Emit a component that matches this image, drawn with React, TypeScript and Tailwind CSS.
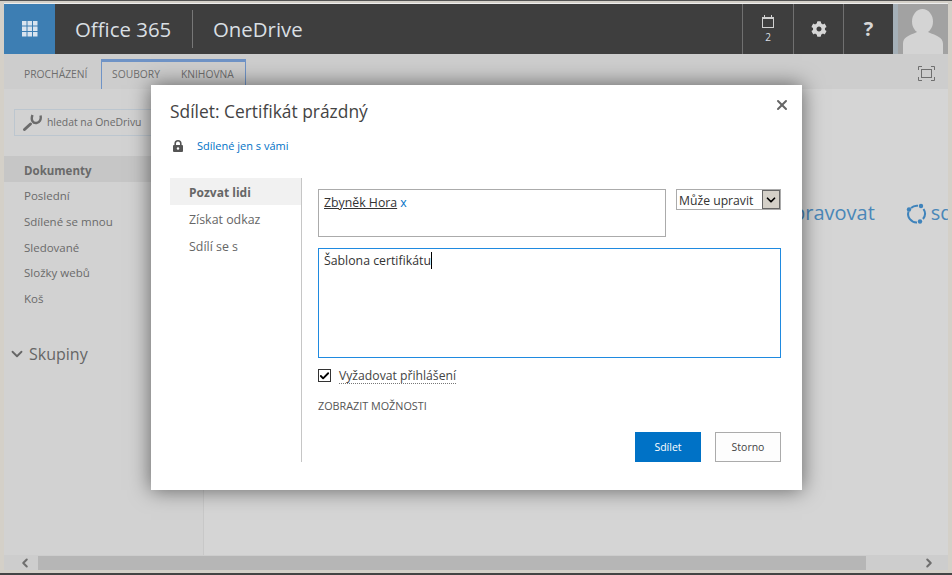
import { Check, ChevronDown, ChevronLeft, ChevronRight, X } from "lucide-react";
import { FaCog } from "react-icons/fa";

const font = "font-['Open_Sans','Noto_Sans',sans-serif]";

const navItems = ["Poslední", "Sdílené se mnou", "Sledované", "Složky webů", "Koš"];

function WaffleIcon() {
  return (
    <svg width="16" height="16" viewBox="0 0 16 16" fill="#d9e4ef">
      {[0, 5.5, 11].map((y) =>
        [0, 5.5, 11].map((x) => <rect key={`${x}-${y}`} x={x} y={y} width="4.5" height="4.5" />)
      )}
    </svg>
  );
}

function SearchIcon() {
  return (
    <svg width="20" height="20" viewBox="0 0 20 20" fill="none" stroke="#6b6b6b">
      <path d="M2.5 16.5 L8.5 11" strokeWidth="3" strokeLinecap="round" />
      <path d="M10.5 2 C8.5 7 11 10.5 14.5 10 C17.5 9.5 19.5 6.5 18.5 2.5" strokeWidth="2.4" />
    </svg>
  );
}

function LockIcon() {
  return (
    <svg width="10" height="12" viewBox="0 0 10 12" className="text-[#555]">
      <path d="M2.2 5.5V3.6a2.8 2.8 0 0 1 5.6 0v1.9" fill="none" stroke="currentColor" strokeWidth="1.6" />
      <rect y="5" width="10" height="7" rx="1" fill="currentColor" />
      <circle cx="5" cy="8.5" r="1.2" fill="#fff" />
    </svg>
  );
}

function CalendarIcon() {
  return (
    <svg width="12" height="13" viewBox="0 0 12 13" fill="none" stroke="#d0d0d0">
      <rect x=".5" y="2.5" width="11" height="10" />
      <rect x=".5" y="2" width="11" height="2" fill="#d0d0d0" stroke="none" />
      <path d="M2.5 0v2M9.5 0v2" />
    </svg>
  );
}

function FocusIcon() {
  return (
    <svg width="17" height="15" viewBox="0 0 17 15" fill="none" stroke="#6f6f6f">
      <path d="M.5 4V.5H4M13 .5h3.5V4M.5 11v3.5H4M13 14.5h3.5V11" />
      <rect x="3.5" y="3.5" width="10" height="8" />
    </svg>
  );
}

function SyncIcon() {
  return (
    <svg width="21" height="21" viewBox="0 0 21 21" fill="none" stroke="#3f83bb" strokeWidth="2">
      <path d="M5 5 A8.5 8.5 0 0 1 12 2.8" />
      <path d="M17.5 6 A8.5 8.5 0 0 1 17 16" />
      <path d="M11 19.5 A8.5 8.5 0 0 1 2.5 8.5" />
      <circle cx="15" cy="3" r="2.2" fill="#3f83bb" stroke="none" />
      <circle cx="14" cy="18.5" r="2.2" fill="#3f83bb" stroke="none" />
      <circle cx="3" cy="6.5" r="2.2" fill="#3f83bb" stroke="none" />
    </svg>
  );
}

function Avatar() {
  return (
    <svg width="50" height="50" viewBox="0 0 50 50" className="block">
      <rect width="50" height="50" fill="#a2a2a2" />
      <ellipse cx="24.5" cy="17.5" rx="10.5" ry="12.5" fill="#d4d4d4" />
      <path d="M5 50 V40 C5 33 10 32 19 28 L30 28 C39 32 45 33 45 40 V50 Z" fill="#d4d4d4" />
    </svg>
  );
}

function Dialog() {
  return (
    <div className="absolute left-[151px] top-[84px] w-[651px] h-[405px] bg-white shadow-[0_0_20px_rgba(0,0,0,0.55)] pl-[19px] pr-[21px] pt-[13px] flex flex-col text-[#444]">
      <X size={16} strokeWidth={3} className="absolute left-[623px] top-[12px] text-[#666]" />
      <h2 className="text-[17.4px] leading-[26px] text-[#444]">Sdílet: Certifikát prázdný</h2>
      <div className="flex items-center mt-[12px] h-[20px]">
        <span className="ml-[3px] flex"><LockIcon /></span>
        <a className="ml-[14px] text-[11px] text-[#0072c6]">Sdílené jen s vámi</a>
      </div>
      <div className="flex mt-[22px] flex-1 mb-[28px]">
        <div className="w-[132px] border-r border-[#c6c6c6] text-[12.4px] text-[#666]">
          <div className="h-[27px] w-[131px] bg-[#f1f1f1] pl-[19px] pt-[2px] flex items-center font-bold text-[12px]">Pozvat lidi</div>
          <div className="h-[27px] pl-[19px] pt-[4px] flex items-center">Získat odkaz</div>
          <div className="h-[27px] pl-[19px] pt-[4px] flex items-center">Sdílí se s</div>
        </div>
        <div className="flex-1 pl-[16px] pt-[11px] flex flex-col">
          <div className="flex justify-between items-start">
            <div className="w-[348px] h-[48px] border border-[#ababab] px-[5px] pt-[3px] text-[12.3px] leading-[19px]">
              <span className="underline text-[#333]">Zbyněk Hora</span>
              <span className="text-[#0072c6]"> x</span>
            </div>
            <div className="w-[105px] h-[21px] border border-[#ababab] flex items-center justify-between text-[12.2px] text-[#333]">
              <span className="pl-[2px] pt-[3px]">Může upravit</span>
              <span className="w-[18px] h-[19px] bg-[#d4d0c8] border border-[#666] flex items-center justify-center">
                <ChevronDown size={14} strokeWidth={3} className="text-black" />
              </span>
            </div>
          </div>
          <div className="w-[463px] h-[110px] mt-[11px] border border-[#1f8ae0] px-[5px] pt-[2px] text-[12.3px] leading-[19px] text-[#333]">
            Šablona certifikátu<span className="border-r border-black" />
          </div>
          <div className="flex items-center mt-[9px] h-[17px]">
            <span className="w-[13px] h-[13px] border border-[#333] flex items-center justify-center">
              <Check size={12} strokeWidth={4} className="text-black" />
            </span>
            <span className="ml-[8px] text-[12.2px] leading-[15px] text-[#444] border-b border-dotted border-[#777]">Vyžadovat přihlášení</span>
          </div>
          <div className="mt-[15px] text-[10.8px] leading-[14px] text-[#555] whitespace-nowrap">ZOBRAZIT MOŽNOSTI</div>
          <div className="flex justify-end gap-[14px] mt-[19px]">
            <button className="w-[66px] h-[30px] pt-[2px] bg-[#0072c6] text-white text-[10.5px]">Sdílet</button>
            <button className="w-[66px] h-[30px] pt-[2px] bg-[#fdfdfd] border border-[#ababab] text-[#444] text-[10.5px]">Storno</button>
          </div>
        </div>
      </div>
    </div>
  );
}

export default function App() {
  return (
    <div className={`${font} relative w-[952px] h-[575px] overflow-hidden bg-[#d4d0c8] border-t border-[#555] border-b-2 border-b-[#444]`}>
      <div className="h-[567px] mt-[2px] mx-[4px] flex flex-col bg-[#d5d5d5] border-t border-[#eee]">
        <header className="h-[50px] bg-[#3e3e3e] flex items-stretch text-[#d9dfe3] shrink-0">
          <div className="w-[51px] bg-[#3d7eb3] flex items-center justify-center">
            <WaffleIcon />
          </div>
          <div className="w-[137px] flex items-center text-[20.4px] pl-[20px]">Office 365</div>
          <div className="w-px h-[38px] self-center bg-[#777]" />
          <div className="flex items-center pl-[20px] text-[20.4px] flex-1">OneDrive</div>
          <div className="w-[51px] border-l border-[#707070] flex flex-col items-center justify-center text-[10px] leading-[13px]">
            <CalendarIcon />
            <span className="mt-[3px]">2</span>
          </div>
          <div className="w-[50px] border-l border-[#707070] flex items-center justify-center">
            <FaCog size={16} className="text-[#d6d6d6]" />
          </div>
          <div className="w-[50px] border-l border-[#707070] flex items-center justify-center text-[20px] font-bold text-[#d6d6d6]">?</div>
          <div className="w-[5px] bg-[#a5b0b8]" />
          <Avatar />
        </header>

        <div className="h-[35px] bg-[#cdcdcd] flex items-end pl-[8px] shrink-0 relative text-[10.3px] text-[#6e6e6e]">
          <div className="w-[89px] h-[29px] flex items-center">
            <span className="ml-[12px]">PROCHÁZENÍ</span>
          </div>
          <div className="w-[145px] h-[30px] border-x border-t-[3px] border-[#6f93c6] flex items-center gap-[21px] pl-[10px] pb-[1px]">
            <span>SOUBORY</span>
            <span>KNIHOVNA</span>
          </div>
          <div className="absolute right-[13px] top-[12px]">
            <FocusIcon />
          </div>
        </div>

        <div className="flex-1 flex min-h-0">
          <aside className="w-[200px] border-r border-[#c8c8c8] bg-[#d2d2d2] pt-[20px] text-[11.5px] text-[#6a6a6a]">
            <div className="ml-[10px] w-[160px] h-[27px] border border-[#bcc6cf] flex items-center pl-[7px]">
              <SearchIcon />
              <span className="ml-[5px] text-[10.4px]">hledat na OneDrivu</span>
            </div>
            <div className="mt-[20px] h-[26px] bg-[#c6c6c6] flex items-center pl-[20px] pt-[3px] font-bold">Dokumenty</div>
            <div className="mt-[1px]">
              {navItems.map((item) => (
                <div key={item} className="h-[25.7px] flex items-center pl-[20px]">{item}</div>
              ))}
            </div>
            <div className="flex items-center mt-[31px] pl-[4px] text-[16px] text-[#666]">
              <ChevronDown size={18} strokeWidth={2.4} />
              <span className="ml-[3px]">Skupiny</span>
            </div>
          </aside>
          <main className="flex-1 relative overflow-hidden text-[20px] text-[#4a87b8]">
            <div className="absolute left-[589px] top-[109px] flex items-center whitespace-nowrap">
              <span>pravovat</span>
              <span className="ml-[31px] flex"><SyncIcon /></span>
              <span className="ml-[4px]">sd</span>
            </div>
          </main>
        </div>

        <div className="h-[15px] bg-[#cdcdcd] flex items-center shrink-0 text-[#6e6e6e]">
          <div className="w-[34px] flex justify-center pl-[8px]">
            <ChevronLeft size={14} strokeWidth={3.5} />
          </div>
          <div className="w-[828px] h-[14px] bg-[#b6b6b6]" />
          <div className="flex-1 flex justify-end pr-[12px]">
            <ChevronRight size={14} strokeWidth={3.5} />
          </div>
        </div>
      </div>
      <Dialog />
    </div>
  );
}
